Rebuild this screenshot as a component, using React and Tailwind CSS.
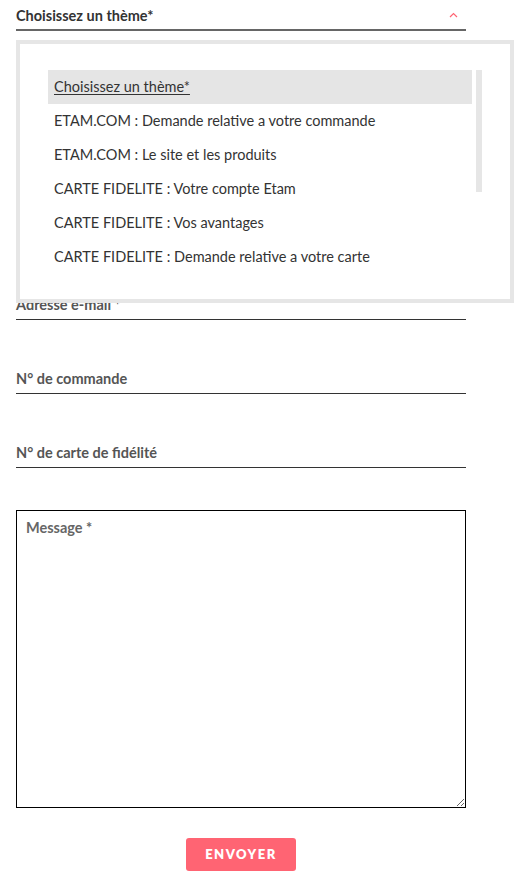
const options = [
  'Choisissez un thème*',
  'ETAM.COM : Demande relative a votre commande',
  'ETAM.COM : Le site et les produits',
  'CARTE FIDELITE : Votre compte Etam',
  'CARTE FIDELITE : Vos avantages',
  'CARTE FIDELITE : Demande relative a votre carte',
];

function Field({ label, className = 'mt-[49px]' }) {
  return (
    <div className={className}>
      <div className="border-b border-[#333] pb-[4px] text-[14.5px] font-bold leading-[20px] text-[#555]">{label}</div>
    </div>
  );
}

export default function App() {
  return (
    <div className="min-h-[880px] bg-white font-['Lato','Liberation_Sans',sans-serif]">
      <form className="w-[450px] ml-4 pb-10">
        <div className="relative pt-[6px]">
          <div className="flex items-center justify-between border-b-2 border-[#666] pb-[3px]">
            <span className="text-[14.5px] font-bold leading-[20px] text-[#333]">Choisissez un thème*</span>
            <svg width="9" height="6" viewBox="0 0 9 6" className="mr-[8px] mb-[3px]" aria-hidden="true">
              <path d="M1 5 L4.5 1.5 L8 5" fill="none" stroke="#ff6473" strokeWidth="1.2" />
            </svg>
          </div>
          <div className="absolute left-0 top-[40px] z-10 w-[498px] border-4 border-[#e6e6e6] bg-white px-[28px] pt-[26px] pb-[25px]">
            <div className="flex gap-[4px]">
              <ul className="h-[204px] flex-1 overflow-hidden">
                {options.map((o, i) => (
                  <li
                    key={o}
                    className={
                      'h-[34px] px-[6px] text-[14.5px] leading-[33px] text-[#333] ' +
                      (i === 0 ? 'bg-[#e5e5e5] underline underline-offset-2' : '')
                    }
                  >
                    {o}
                  </li>
                ))}
              </ul>
              <div className="h-[122px] w-[6px] bg-[#e6e6e6]" />
            </div>
          </div>
        </div>

        <Field label="Adresse e-mail *" className="mt-[264px]" />
        <Field label="N° de commande" />
        <Field label="N° de carte de fidélité" />

        <textarea
          placeholder="Message *"
          className="mt-[42px] block h-[298px] w-[450px] border border-black px-[9px] pt-[7px] text-[14.5px] leading-[20px] text-[#333] outline-none placeholder:font-bold placeholder:text-[#666]"
        />

        <div className="mt-[30px] flex justify-center">
          <button
            type="button"
            className="h-[33px] w-[110px] rounded-[3px] bg-[#ff6473] text-[13px] font-extrabold tracking-[1.5px] text-white"
          >
            ENVOYER
          </button>
        </div>
      </form>
    </div>
  );
}
